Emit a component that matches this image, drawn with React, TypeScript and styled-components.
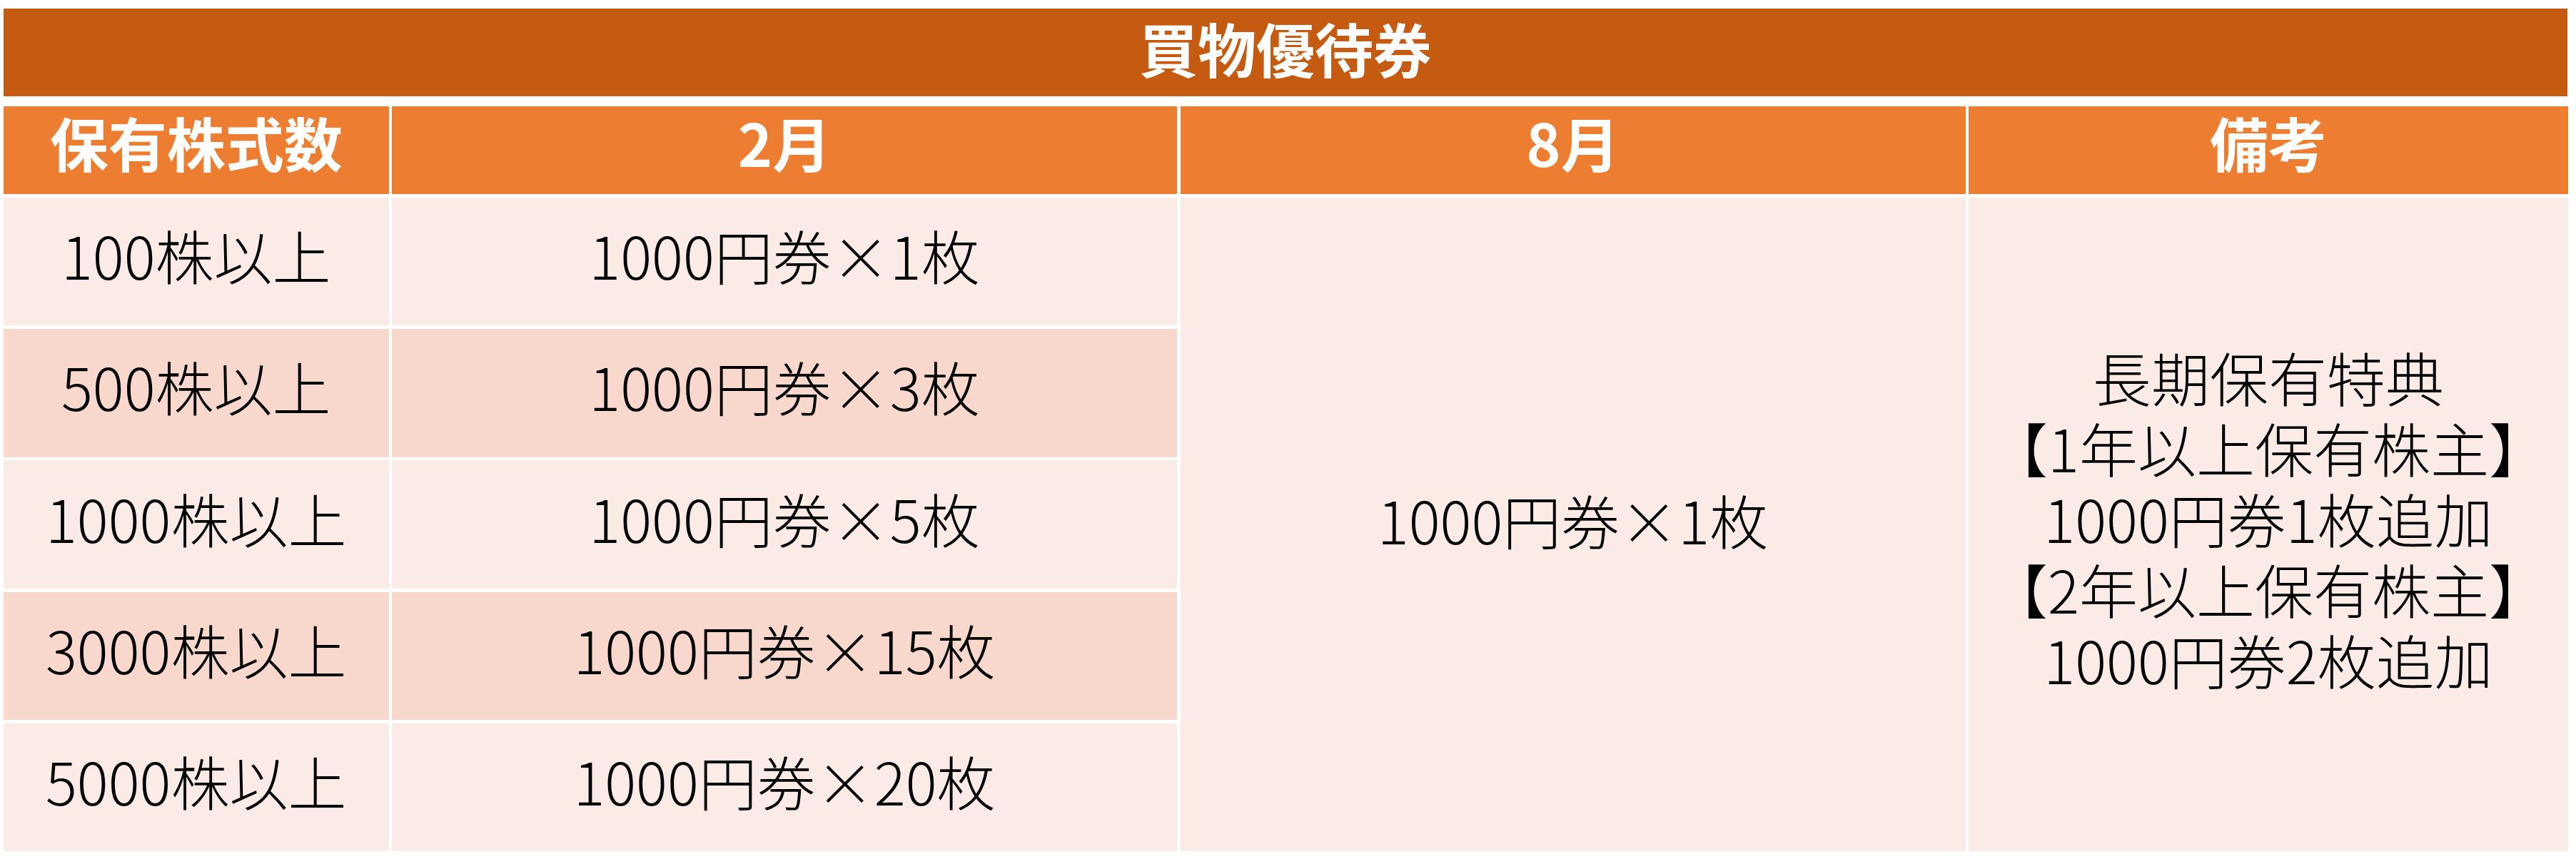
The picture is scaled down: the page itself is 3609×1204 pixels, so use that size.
import React from "react";
import styled, { createGlobalStyle } from "styled-components";

const GlobalStyle = createGlobalStyle`
  html, body {
    margin: 0;
    padding: 0;
    background: #ffffff;
  }
  body {
    font-family: "Noto Sans CJK JP", "Noto Sans", sans-serif;
  }
`;

const Page = styled.div`
  padding: 12px 12px 0 5px;
  width: 3609px;
  box-sizing: border-box;
`;

const TitleBar = styled.div`
  height: 123px;
  background: #c55a11;
  color: #ffffff;
  font-size: 82px;
  font-weight: 700;
  display: flex;
  align-items: center;
  justify-content: center;
  padding-bottom: 13px;
  box-sizing: border-box;
  line-height: 1;
`;

const Table = styled.div`
  margin-top: 14px;
  display: grid;
  grid-template-columns: 539.5px 1100px 1100px 840px;
  grid-template-rows: 123px repeat(5, 179.5px);
  column-gap: 4.5px;
  row-gap: 4.75px;
`;

const Cell = styled.div`
  display: flex;
  align-items: center;
  justify-content: center;
  text-align: center;
  white-space: nowrap;
  box-sizing: border-box;
  line-height: 1;
`;

const HeaderCell = styled(Cell)`
  background: #ed7d31;
  color: #ffffff;
  font-size: 82px;
  font-weight: 700;
  padding-bottom: 23px;
`;

const DataCell = styled(Cell)<{ $band: boolean }>`
  background: ${(p) => (p.$band ? "#f8d7cd" : "#fbebe7")};
  color: #000000;
  font-size: 82px;
  font-weight: 300;
  padding-bottom: 19px;
`;

const MergedCell = styled(Cell)<{ $col: number }>`
  grid-column: ${(p) => p.$col};
  grid-row: 2 / span 5;
  background: #fbebe7;
  color: #000000;
  font-size: 82px;
  font-weight: 300;
  padding-bottom: 15px;
`;

const NoteCell = styled(MergedCell)`
  padding-bottom: 19px;
`;

const NoteLines = styled.div`
  display: flex;
  flex-direction: column;
  align-items: center;
`;

const NoteLine = styled.div`
  height: 99px;
  line-height: 99px;
`;

const rows = [
  { stock: "100株以上", feb: "1000円券×1枚" },
  { stock: "500株以上", feb: "1000円券×3枚" },
  { stock: "1000株以上", feb: "1000円券×5枚" },
  { stock: "3000株以上", feb: "1000円券×15枚" },
  { stock: "5000株以上", feb: "1000円券×20枚" },
];

const notes = [
  "長期保有特典",
  "【1年以上保有株主】",
  "1000円券1枚追加",
  "【2年以上保有株主】",
  "1000円券2枚追加",
];

export default function App() {
  return (
    <>
      <GlobalStyle />
      <Page lang="ja">
        <TitleBar>買物優待券</TitleBar>
        <Table>
          <HeaderCell>保有株式数</HeaderCell>
          <HeaderCell>2月</HeaderCell>
          <HeaderCell>8月</HeaderCell>
          <HeaderCell>備考</HeaderCell>
          {rows.map((r, i) => (
            <React.Fragment key={r.stock}>
              <DataCell $band={i % 2 === 1} style={{ gridColumn: 1, gridRow: i + 2 }}>
                {r.stock}
              </DataCell>
              <DataCell $band={i % 2 === 1} style={{ gridColumn: 2, gridRow: i + 2 }}>
                {r.feb}
              </DataCell>
            </React.Fragment>
          ))}
          <MergedCell $col={3}>1000円券×1枚</MergedCell>
          <NoteCell $col={4}>
            <NoteLines>
              {notes.map((n) => (
                <NoteLine key={n}>{n}</NoteLine>
              ))}
            </NoteLines>
          </NoteCell>
        </Table>
      </Page>
    </>
  );
}
